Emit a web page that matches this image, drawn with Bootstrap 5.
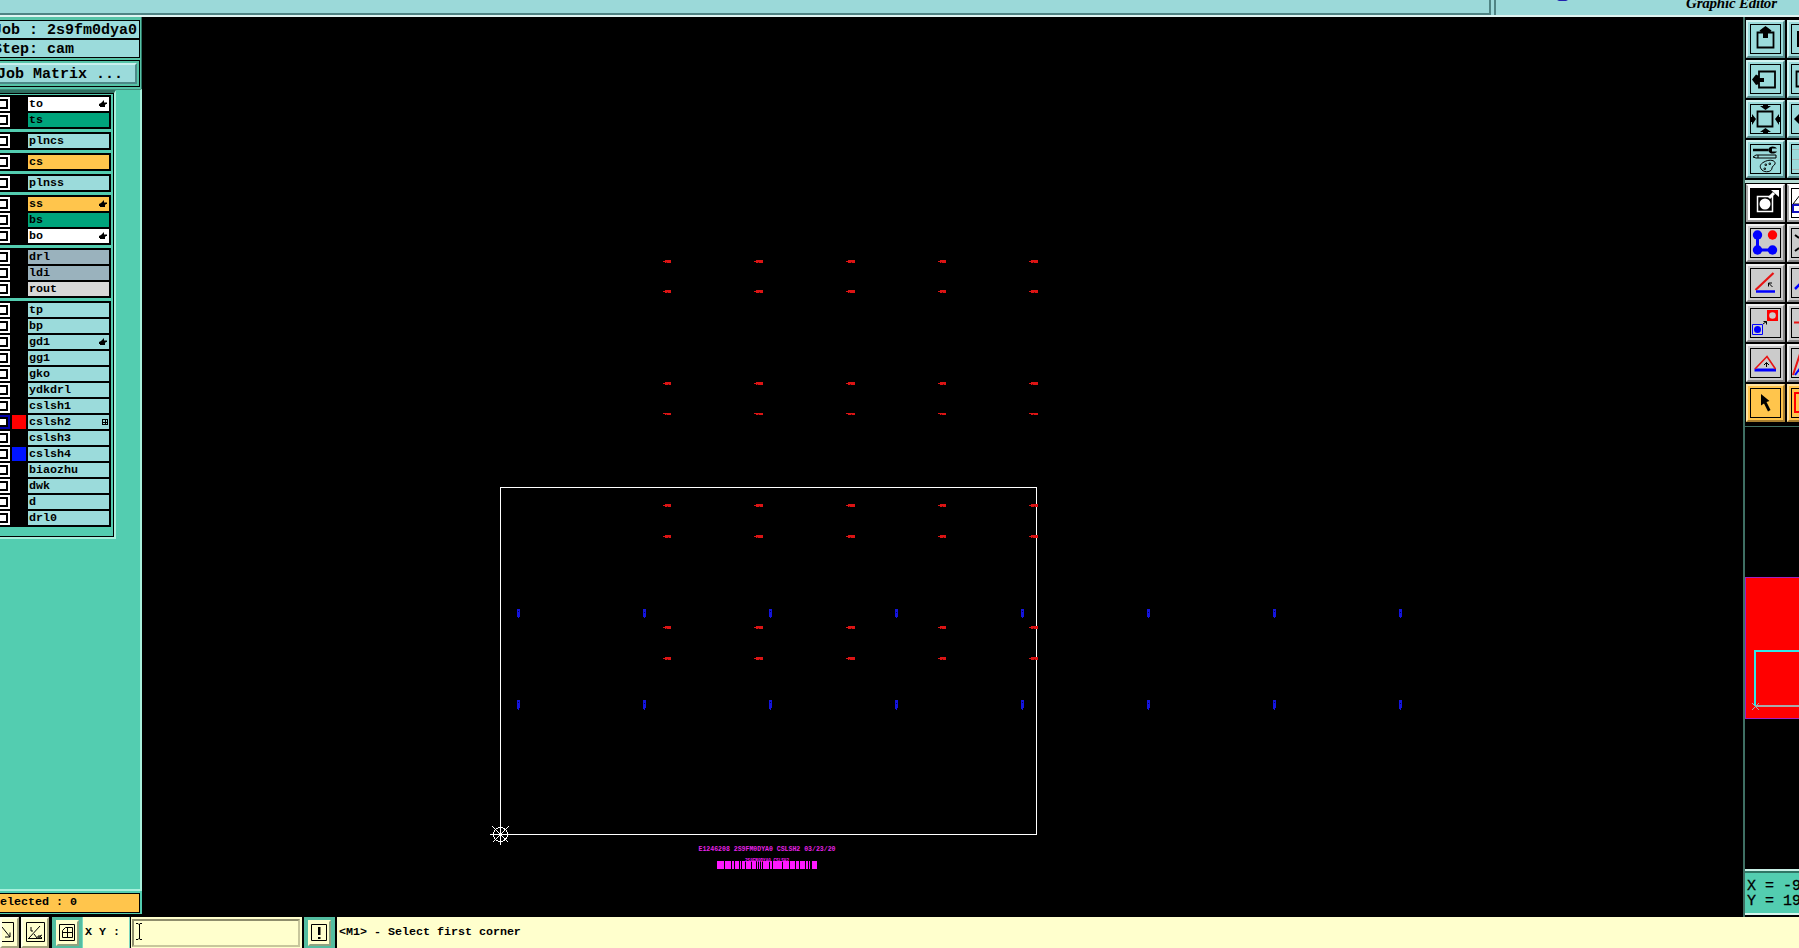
<!DOCTYPE html>
<html lang="en">
<head>
    <meta charset="UTF-8">
    <meta name="viewport" content="width=device-width, initial-scale=1.0">
    <title>Graphic Editor</title>
    <link href="https://cdn.jsdelivr.net/npm/bootstrap@5.3.0/dist/css/bootstrap.min.css" rel="stylesheet">
    <style>
        body { background: #000; color: #000; font-family: "Liberation Mono", monospace; font-weight: 700; font-size: 11.67px; line-height: 14px; }
        svg { display: block; }
        .app { height: 948px; white-space: nowrap; }
        .big-text { font-size: 15px; }

        /* title strip */
        .strip { height: 17px; background: #9bd9d9; border-bottom: 2px solid #dff4f2; }
        .strip-left { width: 1491px; height: 15px; border-right: 2px solid #4f8484; border-bottom: 2px solid #4f8484; }
        .strip-right { margin-left: 3px; border-left: 2px solid #4f8484; height: 15px; }

        /* left side */
        .side { width: 142px; background: #53cdb0; }
        .job-head { height: 72px; padding-top: 3px; background: #57c4a8; border-right: 1px solid #2f7565; }
        .info-box { width: 140px; height: 19px; border: solid #000; border-width: 1px 1px 1px 0; background: #9bdbdb; line-height: 19px; }
        .info-box > span { margin-left: -7px; }
        .matrix-frame { width: 140px; height: 27px; border: solid #000; border-width: 1px 1px 1px 0; padding: 2px 2px 2px 0; margin-top: 2px; }
        .matrix-btn { height: 21px; border: solid; border-width: 2px 2px 2px 0; border-color: #c9f0ee #4c8a88 #4c8a88; background: #9bdbdb; line-height: 20px; }
        .matrix-btn > span { margin-left: -3px; }
        .list-zone { border-right: 2px solid #a8f0dc; border-top: 1px solid #3d8b78; }
        .list-edge { width: 116px; height: 449px; border-top: 3px solid #2f7061; border-right: 2px solid #a8f0dc; border-bottom: 2px solid #a8f0dc; }
        .list-frame { height: 444px; border: solid #000; border-width: 1px 1px 1px 0; padding-top: 1px; }
        .layer-group { width: 111px; background: #000; padding: 2px 0 0; margin-bottom: 3px; }
        .layer-row { height: 16px; }
        .tick { width: 10px; height: 14px; background: #fff; padding: 2px 2px 2px 0; }
        .tick > i { display: block; height: 10px; border: 2px solid #000; border-left: 0; }
        .tick-on { background: #00a; }
        .tick-on > i { background: #fff; }
        .swatch { width: 14px; height: 14px; margin: 0 2px; }
        .layer-name { width: 81px; height: 14px; padding: 0 1px; line-height: 13px; }
        .c-white { background: #fff; } .c-green { background: #00a47c; } .c-cyan { background: #9bdbdb; }
        .c-gold { background: #ffc54c; } .c-slate { background: #9ab2bd; } .c-grey { background: #d8d8d8; }
        .selected-zone { height: 28px; border-top: 2px solid #a8f0dc; padding-top: 2px; border-bottom: 3px solid #000; }
        .selected-box { width: 140px; height: 20px; background: #ffc54c; border: solid #000; border-width: 1px 1px 1px 0; line-height: 17px; }
        .selected-box > span { margin-left: -7px; }

        /* right side */
        .tools { width: 56px; border-left: 2px solid #3f6f63; overflow: hidden; }
        .tool-grid { display: grid; grid-template-columns: 39px 39px; gap: 2px; align-content: start; padding-left: 1px; }
        .tool { width: 39px; height: 38px; border: 2px solid; padding: 2px; }
        .tool > svg { border: 1px solid #000; width: 31px; height: 30px; }
        .t-cyan { background: #9bdbdb; border-color: #d0f2f0 #568b8b #568b8b #d0f2f0; }
        .t-grey { background: #cbcbcb; border-color: #f0f0f0 #858585 #858585 #f0f0f0; }
        .t-white { background: #fff; border-color: #fff #999 #999 #aaa; }
        .t-gold { background: #ffc54c; border-color: #ffe2a0 #a87f30 #a87f30 #ffe2a0; }
        .coords { height: 46px; background: #53cdb0; border-top: 2px solid #c8f0e6; border-bottom: 2px solid #d8f6ee; padding: 8px 0 0 2px; line-height: 15px; font-weight: 400; box-shadow: inset 0 2px #2f7565; margin-bottom: 2px; -webkit-text-stroke: .3px #000; }

        /* bottom bar */
        .status { height: 31px; background: #ffffcd; }
        .st-btn { border: 2px solid; border-color: #ffffe8 #a5a47e #a5a47e #ffffe8; }
        .st-green { background: #53bda0; padding: 3px 3px 2px; }
        .st-green > div { background: #ffffcd; height: 26px; border: 2px solid; border-color: #ffffcd #8fa280 #8fa280 #ffffcd; }
        .xy-input { width: 168px; height: 28px; border: 2px solid; border-color: #8f8e6c #c8c79c #c8c79c #8f8e6c; margin: 2px 2px 0 1px; }
        .status-text { line-height: 31px; }
    </style>
</head>
<body class="overflow-hidden">
    <div class="app d-flex flex-column">
        <header class="strip d-flex flex-shrink-0">
            <div class="strip-left"></div>
            <div class="strip-right flex-grow-1">
                <svg width="303" height="15" viewBox="1496 0 303 15">
                    <path d="M1557 0h11l-2 1h-7z" fill="#2020b0"/>
                    <text x="1686" y="8" textLength="91" font-family="Liberation Serif, serif" font-style="italic" font-weight="700" font-size="15">Graphic Editor</text>
                </svg>
            </div>
        </header>

        <main class="d-flex flex-grow-1">
            <aside class="side d-flex flex-column flex-shrink-0">
                <div class="job-head big-text">
                    <div class="info-box"><span>Job : 2s9fm0dya0</span></div>
                    <div class="info-box"><span>Step: cam</span></div>
                    <div class="matrix-frame"><div class="matrix-btn"><span>Job Matrix ...</span></div></div>
                </div>
                <div class="list-zone flex-grow-1">
                    <div class="list-edge"><div class="list-frame" id="layers"></div></div>
                </div>
                <div class="selected-zone"><div class="selected-box"><span>Selected : 0</span></div></div>
            </aside>

            <svg class="flex-shrink-0" width="1601" height="900" viewBox="142 17 1601 900" shape-rendering="crispEdges">
                <rect x="500.5" y="487.5" width="536" height="347" fill="none" stroke="#fff"/>
                <g id="marks"></g>
                <g stroke="#fff" fill="none">
                    <path d="M490 834.5h20M500.5 824v21M492.500 826.500l16 16M508.500 826.500l-16 16"/>
                    <circle cx="500.5" cy="834.500" r="7"/>
                    <path d="M499 833h3v3h-3z" fill="#fff" stroke="none"/>
                </g>
                <text x="698.500" y="851" textLength="137" lengthAdjust="spacingAndGlyphs" font-family="Liberation Mono, monospace" font-size="7.500" font-weight="700" fill="#e822e8">E1246208 2S9FM0DYA0 CSLSH2 03/23/20</text>
                <text x="745" y="862" textLength="44" lengthAdjust="spacingAndGlyphs" font-family="Liberation Mono, monospace" font-size="5.500" font-weight="700" fill="#ff18ff">2S9FM0DYA0 CSLSH2</text>
                <path fill="#ff18ff" d="M717 861h7v8h-7zM725 861h6v8h-6zM732 861h2v8h-2zM735 861h4v8h-4zM740 861h1v8h-1zM742 861h3v8h-3zM746 861h5v8h-5zM752 861h4v8h-4zM757 861h1v8h-1zM759 861h1v8h-1zM761 861h1v8h-1zM763 861h6v8h-6zM770 861h2v8h-2zM773 861h9v8h-9zM783 861h6v8h-6zM790 861h5v8h-5zM796 861h3v8h-3zM800 861h5v8h-5zM806 861h2v8h-2zM809 861h1v8h-1zM812 861h5v8h-5z"/>
            </svg>

            <aside class="tools d-flex flex-column flex-shrink-0">
                <div class="tool-grid" style="height: 163px; padding-top: 3px">
                    <div class="tool t-cyan"><svg viewBox="0 0 29 28"><path d="M6.500 7.500h16v15h-16z" fill="none" stroke="#000" stroke-width="1.800"/><path d="M14.500 1l6 4.500-1.500 2h-2V13h-5V7.500h-2L8.500 5.500z"/></svg></div>
                    <div class="tool t-cyan"><svg viewBox="0 0 29 28"><path d="M5 6h20v16H5z"/></svg></div>
                    <div class="tool t-cyan"><svg viewBox="0 0 29 28"><path d="M8 6.500h16v16H8z" fill="none" stroke="#000" stroke-width="1.800"/><path d="M1 14.500l4-5 3 1.500v2h5v4H8v2l-3 1z"/></svg></div>
                    <div class="tool t-cyan"><svg viewBox="0 0 29 28"><path d="M4.500 6.500h18v15h-18z" fill="none" stroke="#000" stroke-width="1.800"/></svg></div>
                    <div class="tool t-cyan"><svg viewBox="0 0 29 28"><path d="M6.500 6.500h15v15h-15z" fill="none" stroke="#000" stroke-width="1.800"/><path d="M12 0h5v1h3l-5.500 4L9 1h3zM12 28h5v-1h3l-5.500-4L9 27h3zM0 12h1V9l4 5-4 6v-3H0zM29 12h-1V9l-4 5 4 6v-3h1z"/></svg></div>
                    <div class="tool t-cyan"><svg viewBox="0 0 29 28"><path d="M2 14l5-5v10z"/></svg></div>
                    <div class="tool t-cyan"><svg viewBox="0 0 29 28"><path d="M2 5h15" stroke="#000" stroke-width="2.500"/><path d="M26 3.500h-5v3h5c-2 3-8 3-9-1.500 1-4.500 7-4.500 9-1.500z"/><path d="M2 12l3-2h20v3H5zM7 10v3M13 17c5-3 12-2 11 2-1 2-3 2-3 4 0 4-7 5-10 2s-2-6 2-8z" fill="none" stroke="#000"/><path d="M14 19h1.500v1.500H14zM18 18h1.500v1.500H18zM13 23h1.500v1.500H13z" fill="none" stroke="#000" stroke-width=".8"/></svg></div>
                    <div class="tool t-cyan"><svg viewBox="0 0 29 28"><path d="M0 4.500h29M0 14.500h29M0 24.500h29" stroke="#a3b8b5"/></svg></div>
                </div>
                <div style="height: 3px; background: #b6dcd4"></div>
                <div class="tool-grid" style="height: 243px; padding-top: 1px">
                    <div class="tool t-white"><svg viewBox="0 0 29 28"><path d="M0 0h29v28H0z"/><path d="M6.500 7.500h15v15h-15z" fill="none" stroke="#fff" stroke-width="1.500"/><circle cx="14" cy="15" r="5.500" fill="#fff"/><path d="M18 9l5-5" stroke="#fff" stroke-width="3"/><path d="M20 1h8v7z" fill="#fff"/></svg></div>
                    <div class="tool t-white"><svg viewBox="0 0 29 28"><path d="M1 15l7-9v9z" fill="none" stroke="#000"/><path d="M1 16h9v7H1z" fill="none" stroke="#1010c0" stroke-width="2"/></svg></div>
                    <div class="tool t-grey"><svg viewBox="0 0 29 28"><path d="M6.500 6v15h16" fill="none" stroke="#00f" stroke-width="3"/><g fill="#00f"><circle cx="6.500" cy="6" r="4.700"/><circle cx="6.500" cy="21" r="4.700"/><circle cx="21.500" cy="21" r="4.700"/></g><circle cx="21.500" cy="6" r="4.700" fill="red"/></svg></div>
                    <div class="tool t-grey"><svg viewBox="0 0 29 28"><path d="M3 6l4 3M3 22l4-3" stroke="#000" stroke-width="2"/></svg></div>
                    <div class="tool t-grey"><svg viewBox="0 0 29 28"><path d="M4.500 21L22.500 4" stroke="#e81414" stroke-width="2.200"/><path d="M5 22.500h19" stroke="#00f" stroke-width="2.500"/><path d="M21.500 18l-4-4m0 3.500V14H21" fill="none" stroke="#000"/></svg></div>
                    <div class="tool t-grey"><svg viewBox="0 0 29 28"><path d="M3 20l8-8" stroke="#00f" stroke-width="2.500"/></svg></div>
                    <div class="tool t-grey"><svg viewBox="0 0 29 28"><path d="M16 1h11v11H16z" fill="red"/><circle cx="21.500" cy="6.500" r="3.300" fill="#ccc"/><path d="M1.500 15.500h10v10h-10z" fill="none" stroke="#00f"/><circle cx="6.500" cy="20.500" r="3.500" fill="#00f"/><path d="M12 15l3.500-2.500m-3 0h3v3" fill="none" stroke="#000"/></svg></div>
                    <div class="tool t-grey"><svg viewBox="0 0 29 28"><path d="M2 13.500h16" stroke="#e81414" stroke-width="2"/></svg></div>
                    <div class="tool t-grey"><svg viewBox="0 0 29 28"><path d="M3.500 21h21.500" stroke="#00f" stroke-width="3"/><path d="M4 20L16 7.500 24.500 20" fill="none" stroke="#e81414" stroke-width="1.600"/><path d="M15.500 18v-4.500M13 16l2.500-2.500L18 16" fill="none" stroke="#000"/></svg></div>
                    <div class="tool t-grey"><svg viewBox="0 0 29 28"><path d="M1 26L7 8l6 18" fill="none" stroke="#e81414" stroke-width="2"/><path d="M3 26l6-8" stroke="#00f" stroke-width="2"/></svg></div>
                    <div class="tool t-gold"><svg viewBox="0 0 29 28"><path d="M10 5l8.500 7-3 1 4 8-2.500 1.500-4-8-3 2z"/></svg></div>
                    <div class="tool t-gold"><svg viewBox="0 0 29 28"><path d="M3 4h20v19H3z" fill="none" stroke="red" stroke-width="2"/></svg></div>
                </div>
                <svg class="flex-shrink-0" width="54" height="443" viewBox="1745 426 54 443" shape-rendering="crispEdges">
                    <path d="M1745 424h54v3h-54z" fill="#3f6f63"/>
                    <rect x="1745.500" y="577.500" width="60" height="141" fill="red" stroke="#a020c0"/>
                    <path d="M1755 706h44" stroke="#aaa" stroke-width="2"/>
                    <path d="M1755 706v-55h44" fill="none" stroke="#30e8e8" stroke-width="2"/>
                    <path d="M1752 703l7 7M1759 703l-7 7" stroke="#aaa"/>
                </svg>
                <div class="coords big-text flex-shrink-0">X = -9.53<br>Y = 19.20</div>
            </aside>
        </main>

        <footer class="status d-flex flex-shrink-0">
            <div class="st-btn" style="width: 19px"><svg width="15" height="27"><path d="M-6 3.500h17.500v19H-6zM0 8l8 10M8 13.500V18H3" fill="none" stroke="#000"/></svg></div>
            <div class="bg-black" style="width: 2px"></div>
            <div class="st-btn" style="width: 28px"><svg width="24" height="27"><path d="M3.500 3.500h18v19h-18zM5 19.500h14M6 19L17 7M8 8v4h2M11 15l3 4M15 17h2v2h-2zM19 16l-2 1 2 2" fill="none" stroke="#000"/></svg></div>
            <div style="width: 4px; background: #000; border-right: 1px solid #53bda0"></div>
            <div class="st-green" style="width: 29px"><div><svg width="19" height="22"><path d="M1.500 2.500h15v16h-15zM4.500 15.500v-7l3-3h7v10h-10M9.500 5v10M4 10.500h10" fill="none" stroke="#000"/></svg></div></div>
            <div class="status-text" style="width: 47px; padding-left: 2px; border-left: 1px solid #7cd8c0">X Y :</div>
            <div style="width: 2px; border-left: 1px solid #7cd8c0; background: #000"></div>
            <div class="xy-input"><svg width="14" height="24"><path d="M2 2.500h2l1 1 1-1h2M5.500 3v15M2 18.500h2l1-1 1 1h2" fill="none" stroke="#000"/></svg></div>
            <div style="width: 3px; background: #000; border-right: 1px solid #53bda0"></div>
            <div class="st-green" style="width: 29px"><div><svg width="19" height="22"><path d="M1.500 2.500h15v16h-15z" fill="none" stroke="#000"/><path d="M8 5h2.500v8H8zM8 15h2.500v2H8z"/></svg></div></div>
            <div style="width: 3px; background: #000; border-left: 1px solid #53bda0"></div>
            <div class="status-text" style="padding-left: 2px">&lt;M1&gt; - Select first corner</div>
        </footer>
    </div>

    <script src="https://cdn.jsdelivr.net/npm/bootstrap@5.3.0/dist/js/bootstrap.bundle.min.js"></script>
    <script>
        // name, colour class, flag (h = hand, g = grid), swatch
        const groups = [
            [['to', 'white', 'h'], ['ts', 'green']],
            [['plncs', 'cyan']],
            [['cs', 'gold']],
            [['plnss', 'cyan']],
            [['ss', 'gold', 'h'], ['bs', 'green'], ['bo', 'white', 'h']],
            [['drl', 'slate'], ['ldi', 'slate'], ['rout', 'grey']],
            [['tp', 'cyan'], ['bp', 'cyan'], ['gd1', 'cyan', 'h'], ['gg1', 'cyan'], ['gko', 'cyan'], ['ydkdrl', 'cyan'],
             ['cslsh1', 'cyan'], ['cslsh2', 'cyan', 'g', '#f00'], ['cslsh3', 'cyan'], ['cslsh4', 'cyan', '', '#0014ff'],
             ['biaozhu', 'cyan'], ['dwk', 'cyan'], ['d', 'cyan'], ['drl0', 'cyan']]
        ];
        const flags = {
            h: '<svg width="9" height="8"><path d="M0 4l2-1 3-3v2.500h3v1.500H6.500v1H6v2H1V6H0z"/></svg>',
            g: '<svg width="6" height="6" shape-rendering="crispEdges"><path d="M.5.5h5v5h-5zM3 0v6M0 3h6" fill="none" stroke="#000"/></svg>'
        };

        document.getElementById('layers').innerHTML = groups.map(rows => '<div class="layer-group">' + rows.map(([name, color, flag, swatch]) =>
            `<div class="layer-row d-flex"><div class="tick ${flag === 'g' ? 'tick-on' : ''}"><i></i></div>` +
            `<div class="swatch" style="background:${swatch || '#000'}"></div>` +
            `<div class="layer-name c-${color} d-flex align-items-center justify-content-between"><span>${name}</span>${flags[flag] || ''}</div></div>`
        ).join('') + '</div>').join('');

        // pad labels on the board
        let marks = '';
        [260, 290, 382, 413, 504, 535, 626, 657].forEach((y, r) => {
            [663, 754, 846, 938, 1029].forEach((x, c) => {
                const w = c % 3 ? 7 : 6;
                const h = r === 3 ? 2 : 3;
                marks += `<path fill="#dc1414" d="M${x} ${y + h - 2}h2v-${h - 2}h${w}v${h}h-${w}v-1h-2z"/>`;
                marks += `<path fill="#700808" d="M${x + 3 + (r + c) % 3} ${y + h - 1}h1v1h-1z"/>`;
            });
        });
        [609, 700].forEach((y, r) => {
            for (let i = 0; i < 8; i++) {
                const x = 517 + i * 126;
                marks += `<path fill="#1414dc" d="M${x} ${y}h3v8h-1v${r + 1}h-1v-1h-1z"/>`;
                marks += `<path fill="#000060" d="M${x + 1} ${y + 2 + i % 2}h1v1h-1z"/>`;
            }
        });
        document.getElementById('marks').innerHTML = marks;
    </script>
</body>
</html>
